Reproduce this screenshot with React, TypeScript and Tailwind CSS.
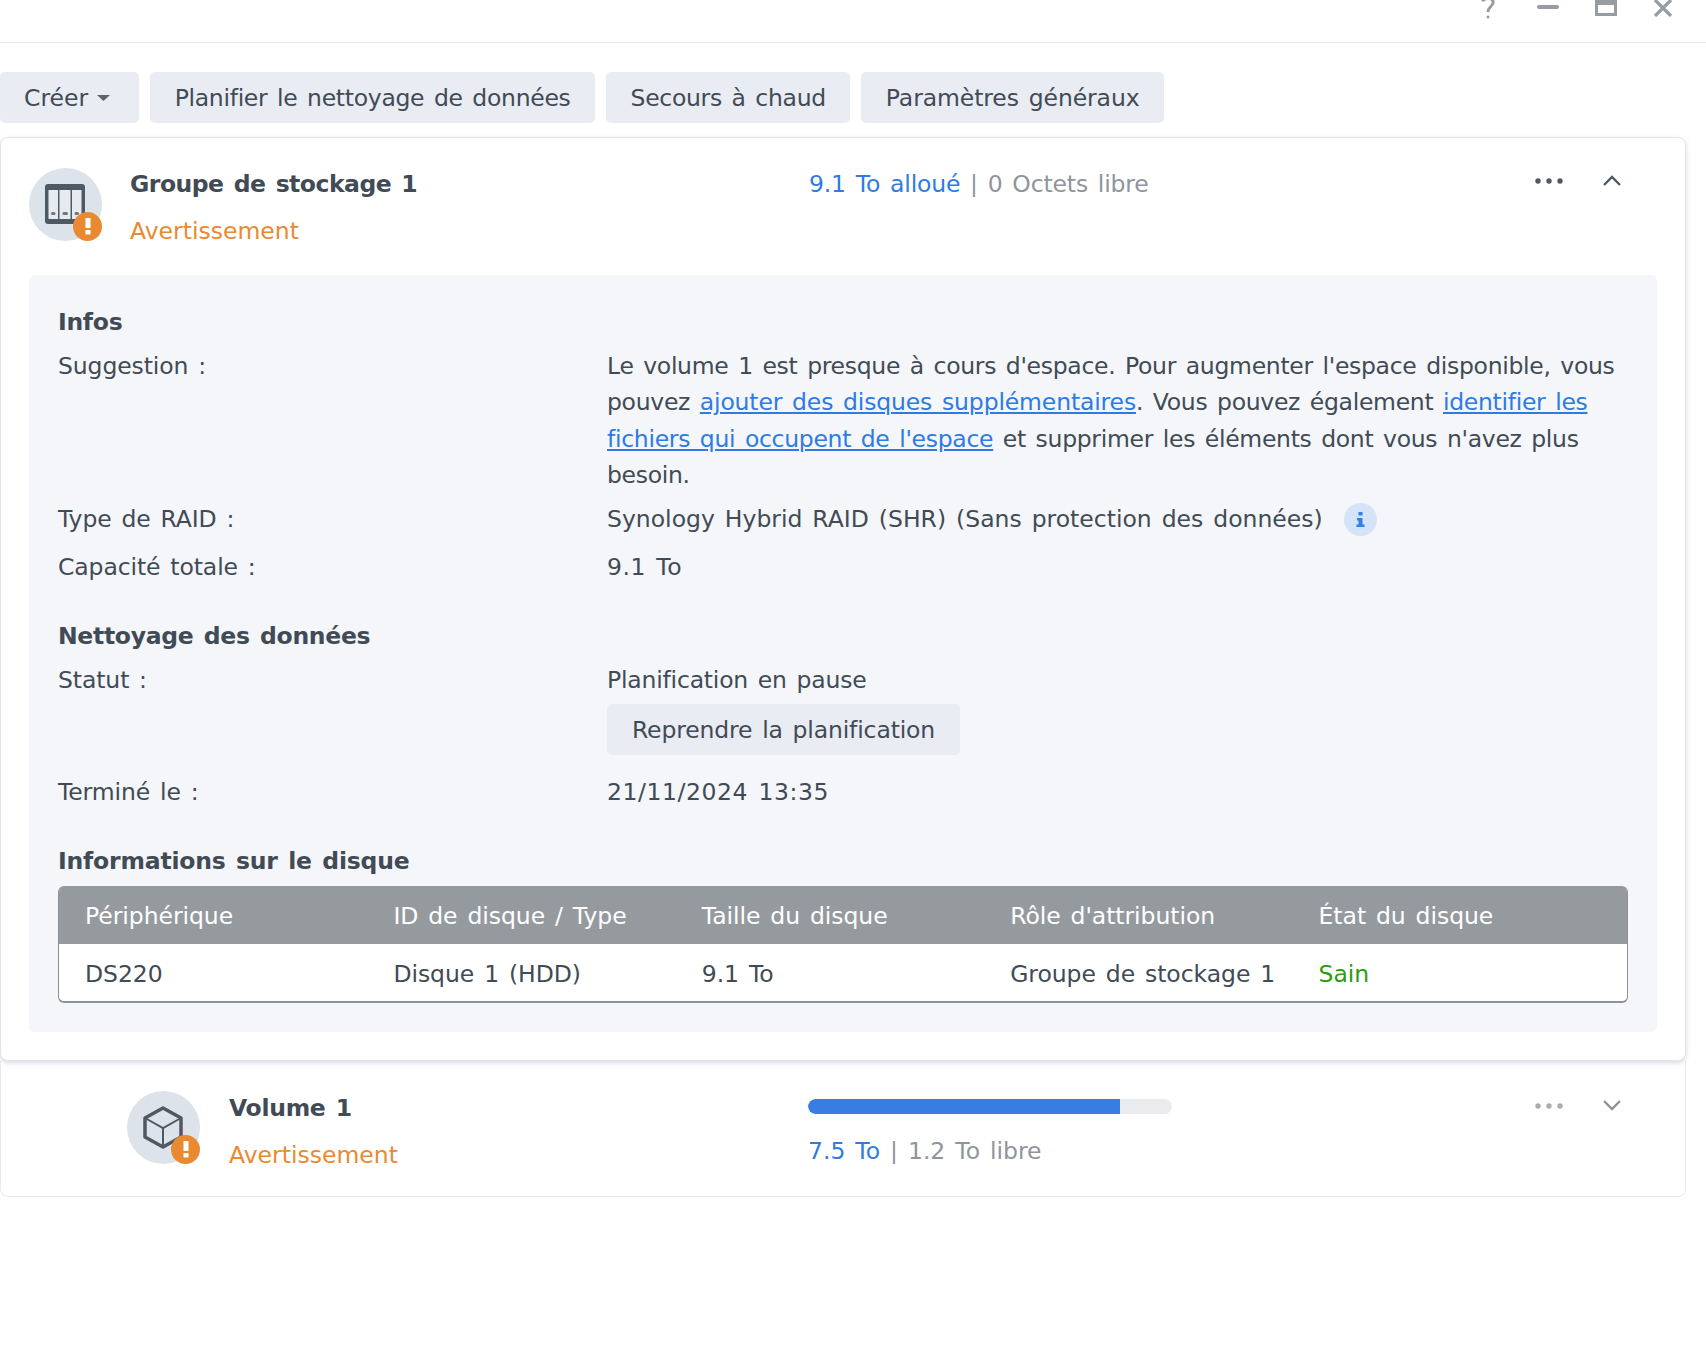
import type { ReactNode } from "react";

const btn = "h-[51px] rounded-[5px] bg-[#e9ecf3] px-[25px] text-[#414b55] [word-spacing:2.5px]";
const link = "text-[#2e7be3] underline";

function WarnBadge() {
  return (
    <div className="absolute bottom-0 right-0 flex h-[29px] w-[29px] items-center justify-center rounded-full bg-[#e98a33]">
      <svg width="8" height="17" viewBox="0 0 8 17" fill="#ffffff">
        <rect x="1.5" y="0" width="5" height="10" rx="0.5" />
        <rect x="1.5" y="12" width="5" height="4.5" rx="0.5" />
      </svg>
    </div>
  );
}

function Dots({ color }: { color: string }) {
  return (
    <svg width="28" height="8" viewBox="0 0 28 8" fill={color}>
      <circle cx="3" cy="4" r="2.7" />
      <circle cx="14" cy="4" r="2.7" />
      <circle cx="25" cy="4" r="2.7" />
    </svg>
  );
}

function Row({ label, children, className }: { label: string; children: ReactNode; className?: string }) {
  return (
    <div className={"flex " + (className ?? "")}>
      <div className="w-[549px] shrink-0 tracking-[-0.1px]">{label}</div>
      <div className="min-w-0 flex-1">{children}</div>
    </div>
  );
}

function Heading({ children, className }: { children: ReactNode; className?: string }) {
  return <div className={"font-bold text-[#414b55] " + (className ?? "")}>{children}</div>;
}

export default function App() {
  return (
    <div className="min-h-[1372px] w-[1706px] bg-white text-[23.5px] leading-[36px] tracking-[-0.3px] text-[#414b55] [font-family:'DejaVu_Sans',sans-serif] [word-spacing:2.5px]">
      <div className="flex h-[43px] items-start justify-end gap-[36px] border-b border-[#e6e8ef] pr-[33px]">
        <svg width="20" height="20" viewBox="0 0 20 20" fill="none" stroke="#969ca2" strokeWidth="3" className="mr-[3px]">
          <path d="M4 1 C8 -3 16 -2 15 3 C14 7 10 7 10 12" />
          <circle cx="10" cy="17" r="1.5" fill="#969ca2" stroke="none" />
        </svg>
        <div className="mt-[5px] h-[4px] w-[22px] rounded-sm bg-[#969ca2]" />
        <svg width="22" height="16" viewBox="0 0 22 16" fill="none" stroke="#969ca2" strokeWidth="3">
          <rect x="1.5" y="-6" width="19" height="20.5" />
          <rect x="1.5" y="0" width="19" height="5" fill="#969ca2" stroke="none" />
        </svg>
        <svg width="20" height="17" viewBox="0 0 20 17" fill="none" stroke="#969ca2" strokeWidth="3.2">
          <path d="M2 0 L18 16 M18 0 L2 16" />
        </svg>
      </div>

      <div className="mt-[29px] flex gap-[11px]">
        <button className={btn + " flex items-center gap-[9px] !pl-[24px] !pr-[29px] tracking-normal"}>
          Créer
          <svg width="13" height="6" viewBox="0 0 13 6" fill="#5b6570">
            <path d="M0 0 H13 L6.5 6 Z" />
          </svg>
        </button>
        <button className={btn + " !pl-[24.5px] !pr-[24.5px]"}>Planifier le nettoyage de données</button>
        <button className={btn + " !pl-[24.5px] !pr-[24.5px]"}>Secours à chaud</button>
        <button className={btn + " !pl-[24.5px] !pr-[24px] tracking-[-0.1px]"}>Paramètres généraux</button>
      </div>

      <div className="mt-[14px] w-[1686px]">
        <div className="relative z-10 h-[924px] rounded-[8px] border border-[#e2e5ed] bg-white px-[28px] shadow-[0_2px_5px_rgba(140,150,175,0.35)]">
          <div className="relative flex h-[137px]">
            <div className="relative mt-[30px] h-[73px] w-[73px] shrink-0 rounded-full bg-[#dce3eb]">
              <svg className="absolute left-[16px] top-[16px]" width="40" height="40" viewBox="0 0 40 40">
                <rect x="0" y="0" width="40" height="40" rx="3" fill="#4f5963" />
                <rect x="3.5" y="6" width="9.5" height="29" fill="#e7ebf0" />
                <rect x="14.5" y="6" width="11" height="29" fill="#e7ebf0" />
                <rect x="27" y="6" width="9.5" height="29" fill="#e7ebf0" />
                <rect x="6" y="28" width="4.5" height="3" rx="1.5" fill="#6d7680" />
                <rect x="17.5" y="28" width="5.5" height="3" rx="1.5" fill="#6d7680" />
                <rect x="29.5" y="28" width="4.5" height="3" rx="1.5" fill="#6d7680" />
              </svg>
              <WarnBadge />
            </div>
            <div className="ml-[28px] mt-[28px]">
              <div className="font-bold tracking-[-0.5px]">Groupe de stockage 1</div>
              <div className="mt-[11px] tracking-normal text-[#e98a33]">Avertissement</div>
            </div>
            <div className="absolute left-[780px] top-[28px] tracking-[-0.15px]">
              <span className="text-[#2e7be3]">9.1 To alloué</span>
              <span className="text-[#8f959c]"> | 0 Octets libre</span>
            </div>
            <div className="absolute left-[1506px] top-[39px]">
              <Dots color="#4f5963" />
            </div>
            <svg className="absolute left-[1574px] top-[37px]" width="18" height="11" viewBox="0 0 18 11" fill="none" stroke="#4f5963" strokeWidth="2.4">
              <path d="M1 10 L9 2 L17 10" />
            </svg>
          </div>

          <div className="h-[757px] rounded-[6px] bg-[#f4f6fa] px-[29px] pt-[29px]">
            <Heading>Infos</Heading>
            <Row label="Suggestion :" className="mt-[8px] leading-[36.3px]">
              Le volume 1 est presque à cours d'espace. Pour augmenter l'espace disponible, vous pouvez{" "}
              <span className={link + " tracking-[-0.15px]"}>ajouter des disques supplémentaires</span>. Vous pouvez également{" "}
              <span className={link}>identifier les fichiers qui occupent de l'espace</span> et supprimer les éléments dont vous n'avez plus besoin.
            </Row>
            <Row label="Type de RAID :" className="mt-[8px]">
              <div className="flex items-center gap-[21px] tracking-normal">
                Synology Hybrid RAID (SHR) (Sans protection des données)
                <div className="flex h-[33px] w-[33px] items-center justify-center rounded-full bg-[#d4e3f8]">
                  <svg width="9" height="15" viewBox="0 0 9 15" fill="#2f7fe6">
                    <rect x="2.5" y="0" width="4" height="3.5" />
                    <path d="M1 6 H6.5 V12.5 H8.5 V15 H0.5 V12.5 H2.5 V8.5 H1 Z" />
                  </svg>
                </div>
              </div>
            </Row>
            <Row label="Capacité totale :" className="mt-[12px]">
              <span className="tracking-[0.5px]">9.1 To</span>
            </Row>
            <Heading className="mt-[33px]">Nettoyage des données</Heading>
            <Row label="Statut :" className="mt-[8px]">
              <div className="tracking-[-0.2px]">Planification en pause</div>
              <button className={btn + " mt-[6px] tracking-[-0.15px]"}>Reprendre la planification</button>
            </Row>
            <Row label="Terminé le :" className="mt-[19px]">
              <span className="tracking-[0.55px]">21/11/2024 13:35</span>
            </Row>
            <Heading className="mt-[33px] tracking-[-0.2px]">Informations sur le disque</Heading>
            <div className="mt-[7px] overflow-hidden rounded-[6px] border-b-2 border-l border-r border-[#8d9298] bg-white tracking-[-0.05px]">
              <div className="-mx-px grid h-[58px] grid-cols-[308.4px_308.4px_308.4px_308.4px_1fr] items-center bg-[#959a9f] pl-[27px] pt-[2px] text-white">
                <div>Périphérique</div>
                <div>ID de disque / Type</div>
                <div>Taille du disque</div>
                <div>Rôle d'attribution</div>
                <div>État du disque</div>
              </div>
              <div className="-mx-px grid h-[57px] grid-cols-[308.4px_308.4px_308.4px_308.4px_1fr] items-center pl-[27px] pt-[2px]">
                <div>DS220</div>
                <div>Disque 1 (HDD)</div>
                <div>9.1 To</div>
                <div>Groupe de stockage 1</div>
                <div className="text-[#2a9d10]">Sain</div>
              </div>
            </div>
          </div>
        </div>

        <div className="relative h-[136px] rounded-b-[8px] border border-t-0 border-[#e8eaf0] bg-white">
          <div className="absolute left-[126px] top-[30px] h-[73px] w-[73px] rounded-full bg-[#dce3eb]">
            <svg className="absolute left-[16px] top-[15px]" width="41" height="43" viewBox="0 0 41 43" fill="none" stroke="#4f5963">
              <path d="M20 2 L38 12 V31 L20 41 L2 31 V12 Z" strokeWidth="3.5" strokeLinejoin="round" />
              <path d="M2 12 L20 22 L38 12 M20 22 V41" strokeWidth="2" />
            </svg>
            <WarnBadge />
          </div>
          <div className="absolute left-[228px] top-[29px]">
            <div className="font-bold">Volume 1</div>
            <div className="mt-[11px] tracking-normal text-[#e98a33]">Avertissement</div>
          </div>
          <div className="absolute left-[807px] top-[38px] h-[15px] w-[364px] overflow-hidden rounded-full bg-[#e9ebee]">
            <div className="h-full w-[312px] rounded-l-full bg-[#3a7de2]" />
          </div>
          <div className="absolute left-[807px] top-[72px] tracking-normal">
            <span className="text-[#2e7be3]">7.5 To</span>
            <span className="text-[#8f959c]"> | 1.2 To libre</span>
          </div>
          <div className="absolute left-[1534px] top-[41px]">
            <Dots color="#a9adb3" />
          </div>
          <svg className="absolute left-[1602px] top-[39px]" width="18" height="11" viewBox="0 0 18 11" fill="none" stroke="#8d9298" strokeWidth="2.4">
            <path d="M1 1 L9 9 L17 1" />
          </svg>
        </div>
      </div>
    </div>
  );
}
